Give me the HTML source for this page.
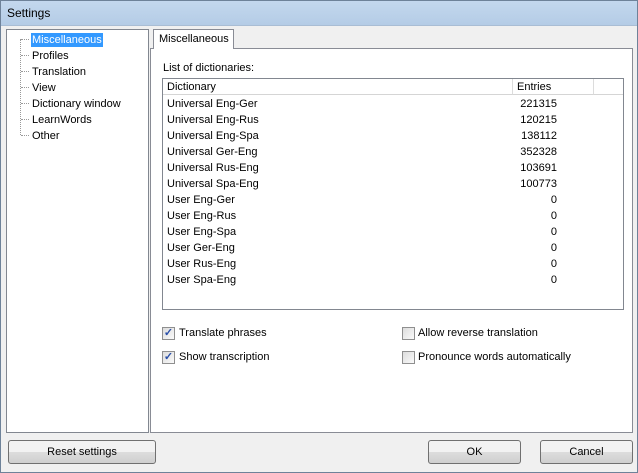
<!DOCTYPE html><html><head><style>
body{margin:0;width:638px;height:473px;overflow:hidden;background:#f0f0f0;font-family:"Liberation Sans",sans-serif;font-size:11px;color:#000;position:relative}
.a{position:absolute}
.title{left:0;top:0;width:638px;height:25px;background:linear-gradient(#c4d8ee,#b4cce6);border-bottom:1px solid #a9bdd4}
.title span{position:absolute;left:7px;top:6px;font-size:12px}
.frame{left:0;top:0;width:636px;height:471px;border:1px solid #6e8299}
.tree{left:6px;top:29px;width:141px;height:402px;background:#fff;border:1px solid #828790}
.ti{position:absolute;left:24px;height:14px;line-height:14px;padding:0 1px}
.sel{background:#3399ff;color:#fff}
.dots{position:absolute;left:13px;top:9px;width:0;height:96px;border-left:1px dotted #999}
.h{position:absolute;left:14px;width:8px;border-top:1px dotted #999}
.pane{left:150px;top:48px;width:481px;height:383px;border:1px solid #898c95;background:#fff}
.tab{left:153px;top:29px;height:20px;border:1px solid #898c95;border-bottom:none;background:#fff;line-height:19px;padding-left:5px;box-sizing:border-box;width:81px}
.list{left:162px;top:78px;width:460px;height:230px;border:1px solid #828790;background:#fff}
.hd{position:absolute;top:0;height:16px;line-height:16px;border-right:1px solid #dcdcdc;border-bottom:1px solid #d5d5d5;background:#fff;padding-left:4px;box-sizing:border-box}
.r{position:absolute;left:4px;height:16px;line-height:16px}
.n{position:absolute;width:394px;text-align:right;left:0;height:16px;line-height:16px}
.cb{width:11px;height:11px;border:1px solid #8f8f8f;background:linear-gradient(135deg,#dcdcdc,#fafafa)}
.btn{height:22px;border:1px solid #707070;border-radius:3px;background:linear-gradient(#f2f2f2 50%,#dddddd 50%,#cfcfcf);text-align:center;line-height:22px}
.lb{top:1px}
</style></head><body>
<div class="a title"><span>Settings</span></div>
<div class="a tree">
<div class="dots"></div>
<div class="h" style="top:9px"></div><div class="h" style="top:25px"></div><div class="h" style="top:41px"></div><div class="h" style="top:57px"></div><div class="h" style="top:73px"></div><div class="h" style="top:89px"></div><div class="h" style="top:105px"></div>
<div class="ti sel" style="top:3px">Miscellaneous</div>
<div class="ti" style="top:19px">Profiles</div>
<div class="ti" style="top:35px">Translation</div>
<div class="ti" style="top:51px">View</div>
<div class="ti" style="top:67px">Dictionary window</div>
<div class="ti" style="top:83px">LearnWords</div>
<div class="ti" style="top:99px">Other</div>
</div>
<div class="a pane"></div>
<div class="a tab">Miscellaneous</div>
<div class="a" style="left:163px;top:62px">List of dictionaries:</div>
<div class="a list">
<div class="hd" style="left:0;width:350px">Dictionary</div>
<div class="hd" style="left:350px;width:81px">Entries</div>
<div class="hd" style="left:431px;width:29px;border-right:none"></div>
<div class="r" style="top:17px">Universal Eng-Ger</div><div class="n" style="top:17px">221315</div>
<div class="r" style="top:33px">Universal Eng-Rus</div><div class="n" style="top:33px">120215</div>
<div class="r" style="top:49px">Universal Eng-Spa</div><div class="n" style="top:49px">138112</div>
<div class="r" style="top:65px">Universal Ger-Eng</div><div class="n" style="top:65px">352328</div>
<div class="r" style="top:81px">Universal Rus-Eng</div><div class="n" style="top:81px">103691</div>
<div class="r" style="top:97px">Universal Spa-Eng</div><div class="n" style="top:97px">100773</div>
<div class="r" style="top:113px">User Eng-Ger</div><div class="n" style="top:113px">0</div>
<div class="r" style="top:129px">User Eng-Rus</div><div class="n" style="top:129px">0</div>
<div class="r" style="top:145px">User Eng-Spa</div><div class="n" style="top:145px">0</div>
<div class="r" style="top:161px">User Ger-Eng</div><div class="n" style="top:161px">0</div>
<div class="r" style="top:177px">User Rus-Eng</div><div class="n" style="top:177px">0</div>
<div class="r" style="top:193px">User Spa-Eng</div><div class="n" style="top:193px">0</div>
</div>
<div class="a cb" style="left:162px;top:327px;color:#2a4fa8;font-size:11px;line-height:11px;text-align:center;font-weight:bold">✓</div><div class="a" style="left:179px;top:327px">Translate phrases</div>
<div class="a cb" style="left:162px;top:351px;color:#2a4fa8;font-size:11px;line-height:11px;text-align:center;font-weight:bold">✓</div><div class="a" style="left:179px;top:351px">Show transcription</div>
<div class="a cb" style="left:402px;top:327px"></div><div class="a" style="left:418px;top:327px">Allow reverse translation</div>
<div class="a cb" style="left:402px;top:351px"></div><div class="a" style="left:418px;top:351px">Pronounce words automatically</div>
<div class="a btn" style="left:8px;top:440px;width:146px">Reset settings</div>
<div class="a btn" style="left:428px;top:440px;width:91px">OK</div>
<div class="a btn" style="left:540px;top:440px;width:91px">Cancel</div>
<div class="a frame"></div>
</body></html>
